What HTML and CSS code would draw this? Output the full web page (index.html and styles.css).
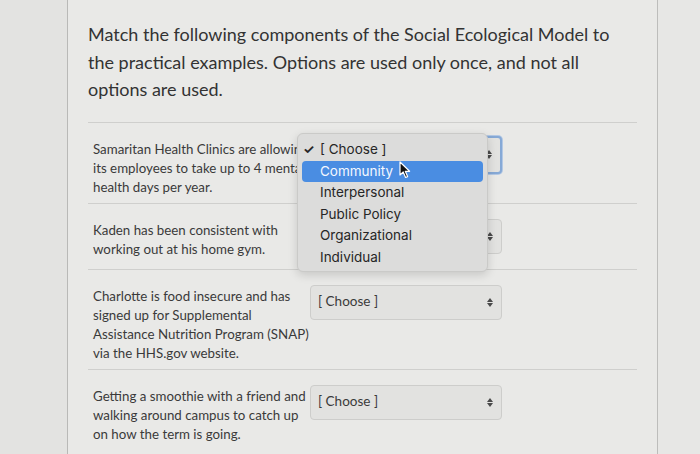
FILE: index.html
```html
<!DOCTYPE html>
<html>
<head>
<meta charset="utf-8">
<link rel="stylesheet" href="styles.css">
</head>
<body>
<div class="page">
  <div class="gutter"></div>
  <main class="content">
    <p class="question">Match the following components of the Social Ecological Model to the practical examples. Options are used only once, and not all options are used.</p>
    <div class="rows">
      <div class="row">
        <div class="prompt">Samaritan Health Clinics are allowing its employees to take up to 4 mental health days per year.</div>
        <div class="select focused"><span class="sel-text">[ Choose ]</span><span class="arrows"><i class="up"></i><i class="down"></i></span></div>
      </div>
      <div class="row">
        <div class="prompt">Kaden has been consistent with working out at his home gym.</div>
        <div class="select"><span class="sel-text">[ Choose ]</span><span class="arrows"><i class="up"></i><i class="down"></i></span></div>
      </div>
      <div class="row">
        <div class="prompt">Charlotte is food insecure and has signed up for Supplemental Assistance Nutrition Program (SNAP) via the HHS.gov website.</div>
        <div class="select"><span class="sel-text">[ Choose ]</span><span class="arrows"><i class="up"></i><i class="down"></i></span></div>
      </div>
      <div class="row">
        <div class="prompt">Getting a smoothie with a friend and walking around campus to catch up on how the term is going.</div>
        <div class="select"><span class="sel-text">[ Choose ]</span><span class="arrows"><i class="up"></i><i class="down"></i></span></div>
      </div>
    </div>
  </main>
  <div class="side"></div>

  <div class="menu">
    <div class="item checked"><span class="check">✓</span>[ Choose ]</div>
    <div class="item active">Community
      <svg class="cursor" width="12" height="18" viewBox="0 0 12 18"><path d="M1 1 L1 14 L4.2 11 L6.6 16.5 L8.6 15.6 L6.3 10.3 L10.6 10.3 Z" fill="#111" stroke="#fff" stroke-width="1.2" stroke-linejoin="round"/></svg>
    </div>
    <div class="item">Interpersonal</div>
    <div class="item">Public Policy</div>
    <div class="item">Organizational</div>
    <div class="item">Individual</div>
  </div>
</div>
</body>
</html>
```
FILE: styles.css
```css
* { box-sizing: border-box; }
html, body { margin: 0; padding: 0; }
body {
  background: #e8e8e6;
  font-family: Lato, "Open Sans", sans-serif;
  color: #383838;
  width: 700px;
  height: 454px;
  overflow: hidden;
}
.page {
  position: relative;
  display: flex;
  height: 454px;
}
.gutter {
  width: 68px;
  flex: none;
  background: #e3e3e1;
  border-right: 1px solid #b9b9b7;
}
.content {
  width: 590px;
  flex: none;
  padding: 21px 20px 0 20px;
  border-right: 1px solid #bdbdbb;
  background: #e9e9e7;
}
.side {
  flex: 1;
  background: #e7e7e5;
}
.question {
  margin: 0 0 18px 0;
  font-size: 18px;
  line-height: 27.5px;
  color: #333;
}
.row {
  display: flex;
  align-items: flex-start;
  border-top: 1px solid #cfcfcd;
  padding: 15px 0 6px 5px;
  min-height: 66px;
}
.prompt {
  width: 217px;
  flex: none;
  font-size: 13.3px;
  line-height: 19px;
  margin-top: 2px;
  color: #3a3a3a;
}
.select {
  width: 192px;
  height: 35px;
  flex: none;
  display: flex;
  align-items: center;
  justify-content: space-between;
  padding: 0 8px 0 7px;
  background: #e2e2e0;
  border: 1px solid #cdcdcb;
  border-radius: 4px;
  font-size: 13.5px;
  color: #3a3a3a;
}
.select .sel-text { margin-top: -2px; }
.select.focused {
  height: 38px;
  margin-top: -2px;
  border: 2px solid #86a9d6;
  box-shadow: 0 0 0 1px #b3c8e4;
}
.arrows {
  display: flex;
  flex-direction: column;
  gap: 1px;
}
.arrows i {
  display: block;
  width: 0;
  height: 0;
  border-left: 3px solid transparent;
  border-right: 3px solid transparent;
}
.arrows .up { border-bottom: 4px solid #4a4a4a; }
.arrows .down { border-top: 4px solid #4a4a4a; }

.menu {
  position: absolute;
  left: 297px;
  top: 133px;
  width: 191px;
  height: 139px;
  padding: 5px 4px 4px 4px;
  background: #dcdcdb;
  border: 1px solid #cacac8;
  border-radius: 6px;
  box-shadow: 0 3px 10px rgba(0,0,0,0.15);
  font-family: Inter, "Noto Sans", sans-serif;
  font-size: 13.5px;
  color: #262626;
}
.item {
  position: relative;
  height: 21.6px;
  line-height: 21.6px;
  padding-left: 18px;
  border-radius: 4px;
}
.item .check {
  position: absolute;
  left: 1px;
  top: 0;
  font-size: 13px;
  font-weight: 700;
}
.item.active {
  background: #4a8de2;
  color: #f4f8ff;
}
.cursor {
  position: absolute;
  left: 97px;
  top: 0;
}
```
